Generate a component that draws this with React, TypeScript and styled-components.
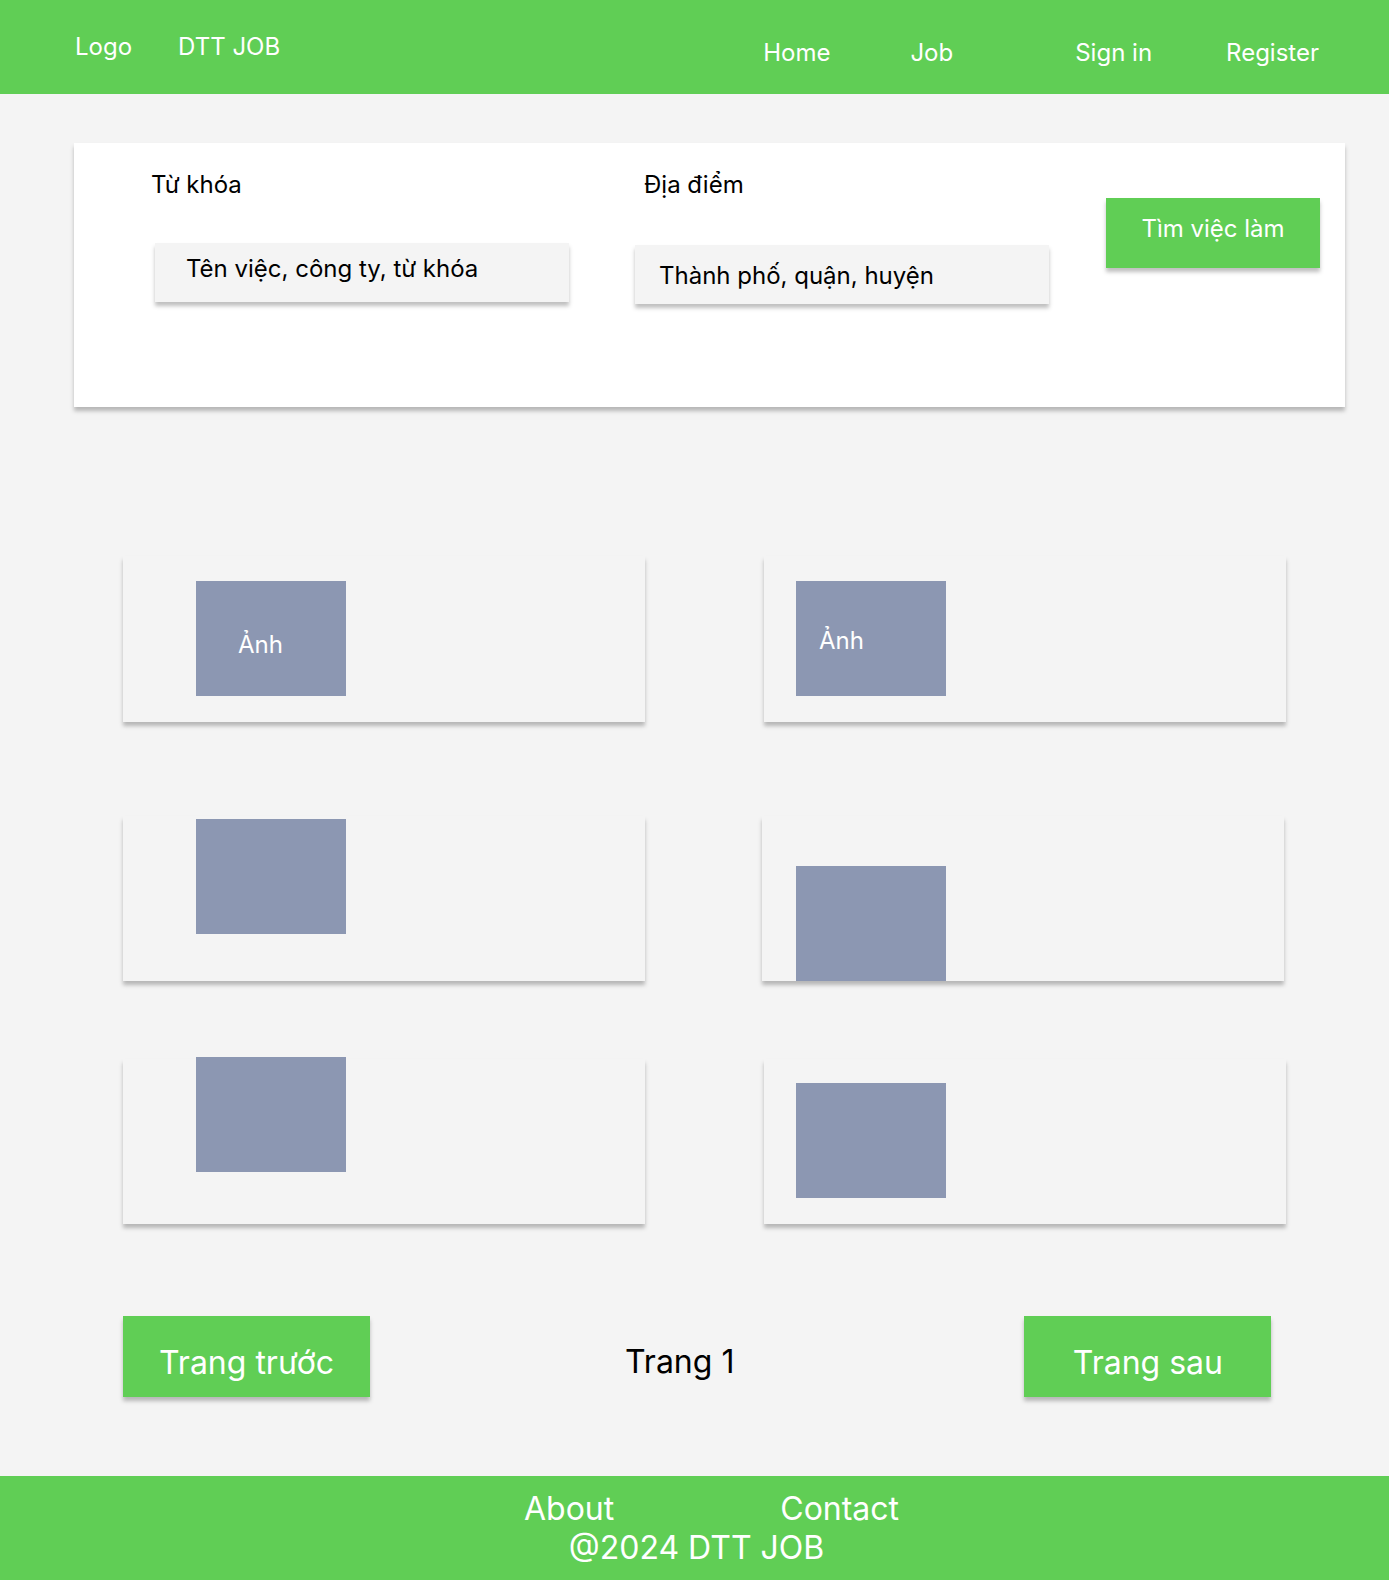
import React from "react";
import styled, { createGlobalStyle } from "styled-components";

const GREEN = "#60ce55";
const PAGE = "#f4f4f4";
const THUMB = "#8c97b2";
const SHADOW = "0 4px 4px rgba(0, 0, 0, 0.25)";

const GlobalStyle = createGlobalStyle`
  * { box-sizing: border-box; }
  html, body { margin: 0; padding: 0; background: ${PAGE}; }
  body { font-family: Inter, "Noto Sans", "Liberation Sans", sans-serif; color: #000; }
`;

const Page = styled.div`
  width: 1389px;
  min-height: 1580px;
  display: flex;
  flex-direction: column;
  background: ${PAGE};
`;

/* ---------- header ---------- */
const Header = styled.header`
  height: 94px;
  background: ${GREEN};
  display: flex;
  align-items: flex-start;
  padding: 0 70px 0 75px;
  color: #fff;
  font-size: 24px;
  line-height: 29px;
`;

const Brand = styled.div`
  display: flex;
  gap: 46px;
  padding-top: 32px;
`;

const Nav = styled.nav`
  display: flex;
  margin-left: auto;
  padding-top: 38px;
`;

const NavLink = styled.a<{ $ml: number }>`
  color: #fff;
  text-decoration: none;
  margin-left: ${(p) => p.$ml}px;
  white-space: nowrap;
`;

/* ---------- search card ---------- */
const Main = styled.main`
  display: flex;
  flex-direction: column;
  padding: 49px 0 0;
`;

const SearchCard = styled.section`
  margin-left: 74px;
  width: 1271px;
  height: 264px;
  background: #fff;
  box-shadow: ${SHADOW};
  display: flex;
  align-items: flex-start;
`;

const Field = styled.div<{ $ml: number }>`
  display: flex;
  flex-direction: column;
  margin-left: ${(p) => p.$ml}px;
  padding-top: 27px;
`;

const Label = styled.label<{ $ml: number }>`
  font-size: 24px;
  line-height: 29px;
  margin-left: ${(p) => p.$ml}px;
  white-space: nowrap;
`;

const InputBox = styled.div<{ $ml: number; $mt: number; $px: number; $pt: number }>`
  width: 414px;
  height: 59px;
  margin-left: ${(p) => p.$ml}px;
  margin-top: ${(p) => p.$mt}px;
  padding: ${(p) => p.$pt}px 0 0 ${(p) => p.$px}px;
  background: ${PAGE};
  box-shadow: ${SHADOW};
  font-size: 24px;
  line-height: 29px;
  white-space: nowrap;
`;

const SearchButton = styled.button`
  margin: 55px 0 0 57px;
  width: 214px;
  height: 70px;
  border: none;
  padding: 0 0 9px;
  background: ${GREEN};
  box-shadow: ${SHADOW};
  color: #fff;
  font-family: inherit;
  font-size: 24px;
  line-height: 29px;
  cursor: pointer;
`;

/* ---------- job cards ---------- */
const CardList = styled.section`
  display: flex;
  flex-direction: column;
  margin-top: 149px;
`;

const CardRow = styled.div<{ $mt: number }>`
  display: flex;
  padding-left: 123px;
  gap: 119px;
  margin-top: ${(p) => p.$mt}px;
`;

const JobCard = styled.article<{ $h: number; $nudge?: number }>`
  width: 522px;
  height: ${(p) => p.$h}px;
  background: ${PAGE};
  box-shadow: ${SHADOW};
  display: flex;
  align-items: flex-start;
  margin-left: ${(p) => p.$nudge ?? 0}px;
`;

const Thumb = styled.div<{ $left: number; $top: number }>`
  width: 150px;
  height: 115px;
  margin-left: ${(p) => p.$left}px;
  margin-top: ${(p) => p.$top}px;
  background: ${THUMB};
  display: flex;
  align-items: flex-start;
`;

const ThumbText = styled.span<{ $x: number; $y: number }>`
  color: #fff;
  font-size: 24px;
  line-height: 29px;
  margin: ${(p) => p.$y}px 0 0 ${(p) => p.$x}px;
`;

/* ---------- pagination ---------- */
const Pager = styled.div`
  display: flex;
  align-items: flex-start;
  margin-top: 92px;
  padding-left: 123px;
`;

const PageButton = styled.button<{ $ml?: number }>`
  width: 247px;
  height: 81px;
  border: none;
  background: ${GREEN};
  box-shadow: ${SHADOW};
  color: #fff;
  font-family: inherit;
  font-size: 32px;
  line-height: 39px;
  padding: 12px 0 0;
  margin-left: ${(p) => p.$ml ?? 0}px;
  white-space: nowrap;
  cursor: pointer;
`;

const PageLabel = styled.span`
  font-size: 32px;
  line-height: 39px;
  margin: 26px 0 0 255px;
  white-space: nowrap;
`;

/* ---------- footer ---------- */
const Footer = styled.footer`
  margin-top: 79px;
  height: 104px;
  background: ${GREEN};
  color: #fff;
  font-size: 32px;
  line-height: 39px;
  display: flex;
  flex-direction: column;
  padding-top: 13px;
`;

const FooterLinks = styled.div`
  display: flex;
  padding-left: 524px;
  gap: 166px;
`;

const FooterLink = styled.a`
  color: #fff;
  text-decoration: none;
`;

const Copyright = styled.div`
  text-align: center;
  margin-left: 4px;
`;

type CardSpec = { h: number; left: number; top: number; nudge?: number; label?: { x: number; y: number } };

const rows: { mt: number; cards: CardSpec[] }[] = [
  {
    mt: 0,
    cards: [
      { h: 166, left: 73, top: 25, label: { x: 42, y: 49 } },
      { h: 166, left: 32, top: 25, label: { x: 23, y: 45 } },
    ],
  },
  {
    mt: 94,
    cards: [
      { h: 165, left: 73, top: 3 },
      { h: 165, left: 34, top: 50, nudge: -2 },
    ],
  },
  {
    mt: 78,
    cards: [
      { h: 165, left: 73, top: -2 },
      { h: 165, left: 32, top: 24 },
    ],
  },
];

export default function App() {
  return (
    <Page>
      <GlobalStyle />
      <Header>
        <Brand>
          <span>Logo</span>
          <span>DTT JOB</span>
        </Brand>
        <Nav>
          <NavLink $ml={0}>Home</NavLink>
          <NavLink $ml={80}>Job</NavLink>
          <NavLink $ml={122}>Sign in</NavLink>
          <NavLink $ml={74}>Register</NavLink>
        </Nav>
      </Header>

      <Main>
        <SearchCard>
          <Field $ml={77}>
            <Label $ml={0}>Từ khóa</Label>
            <InputBox $ml={4} $mt={44} $px={31} $pt={11}>
              Tên việc, công ty, từ khóa
            </InputBox>
          </Field>
          <Field $ml={65}>
            <Label $ml={10}>Địa điểm</Label>
            <InputBox $ml={1} $mt={46} $px={24} $pt={16}>
              Thành phố, quận, huyện
            </InputBox>
          </Field>
          <SearchButton>Tìm việc làm</SearchButton>
        </SearchCard>

        <CardList>
          {rows.map((row, i) => (
            <CardRow key={i} $mt={row.mt}>
              {row.cards.map((c, j) => (
                <JobCard key={j} $h={c.h} $nudge={c.nudge}>
                  <Thumb $left={c.left} $top={c.top}>
                    {c.label && (
                      <ThumbText $x={c.label.x} $y={c.label.y}>
                        Ảnh
                      </ThumbText>
                    )}
                  </Thumb>
                </JobCard>
              ))}
            </CardRow>
          ))}
        </CardList>

        <Pager>
          <PageButton>Trang trước</PageButton>
          <PageLabel>Trang 1</PageLabel>
          <PageButton $ml={290}>Trang sau</PageButton>
        </Pager>
      </Main>

      <Footer>
        <FooterLinks>
          <FooterLink>About</FooterLink>
          <FooterLink>Contact</FooterLink>
        </FooterLinks>
        <Copyright>@2024 DTT JOB</Copyright>
      </Footer>
    </Page>
  );
}
